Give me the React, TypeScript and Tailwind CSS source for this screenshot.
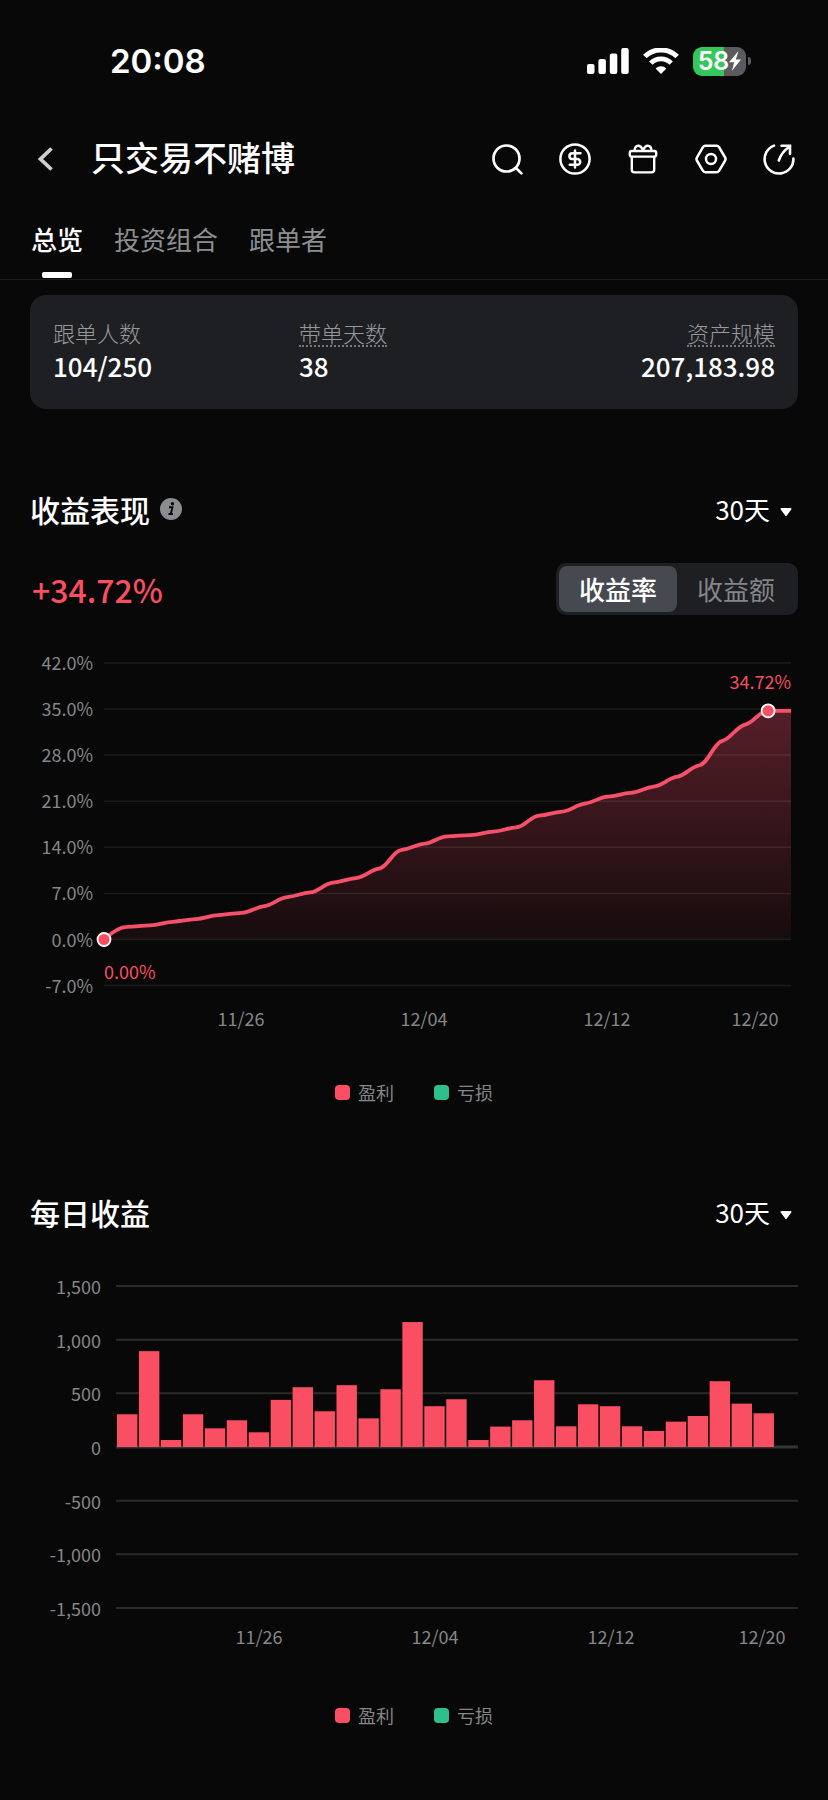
import React, { useState } from 'react';

const RETURNS = [
  0, 1.93, 2.13, 2.69, 3.09, 3.7, 4.05, 5.07, 6.44, 7.15, 8.62, 9.33, 10.75, 13.6, 14.55, 15.66,
  15.86, 16.37, 17.03, 18.8, 19.41, 20.63, 21.69, 22.25, 23.21, 24.68, 26.46, 30.16, 32.64, 34.72, 34.72,
];

const DAILY = [
  305, 893, 65, 305, 174, 249, 137, 439, 557, 333, 576, 267, 538, 1164, 380, 445,
  65, 190, 249, 622, 193, 398, 380, 193, 149, 236, 289, 613, 404, 314, 0,
];

const TABS = ['总览', '投资组合', '跟单者'];
const MODES = ['收益率', '收益额'];
const PERIODS = ['7天', '30天', '90天'];

const SearchIcon = () => (
  <svg className="size-8" viewBox="0 0 32 32" fill="none" stroke="currentColor" strokeWidth="2.7" strokeLinecap="round">
    <circle cx="15.5" cy="15.5" r="13" />
    <path d="M25 25l5.4 5.4" />
  </svg>
);

const DollarIcon = () => (
  <svg className="size-8" viewBox="0 0 32 32" fill="none" stroke="currentColor" strokeWidth="2.5" strokeLinecap="round">
    <circle cx="16" cy="16" r="14.6" />
    <path d="M21.5 10.3h-8.200a2.800 2.800 0 0 0 0 5.700h5a2.900 2.900 0 0 1 0 5.800H10.800M16 7.500v17" />
  </svg>
);

const GiftIcon = () => (
  <svg className="size-8" viewBox="0 0 32 32" fill="none" stroke="currentColor" strokeWidth="2.4" strokeLinejoin="round">
    <rect x="2.8" y="8" width="26.4" height="5.6" rx="1.8" />
    <path d="M4.800 13.600v13.200a2.600 2.600 0 0 0 2.600 2.600h17.200a2.600 2.600 0 0 0 2.600-2.600V13.600" />
    <path d="M7.600 8c0-3 1.200-5.200 3.600-5.200S15 5 16 7.400c1-2.400 2.400-4.600 4.800-4.600S24.400 5 24.400 8" />
  </svg>
);

const HexIcon = () => (
  <svg className="size-8" viewBox="0 0 32 32" fill="none" stroke="currentColor" strokeWidth="2.5" strokeLinejoin="round">
    <path d="M10.400 2.800h11.200a3 3 0 0 1 2.600 1.500l5.900 10.200a3 3 0 0 1 0 3l-5.900 10.200a3 3 0 0 1-2.600 1.500H10.400a3 3 0 0 1-2.600-1.500L1.900 17.500a3 3 0 0 1 0-3L7.800 4.300a3 3 0 0 1 2.600-1.500z" />
    <circle cx="16" cy="16" r="5" />
  </svg>
);

const ShareIcon = () => (
  <svg className="size-8" viewBox="0 0 32 32" fill="none" stroke="currentColor" strokeWidth="2.6" strokeLinecap="round">
    <path d="M11 2.600A14.400 14.400 0 1 0 30.400 15.500" />
    <path d="M15.800 17.500C17.500 12.500 21 7.500 26.200 3.800M18.500 2.800H27V11" />
  </svg>
);

const ACTIONS = [
  { label: '搜索', icon: SearchIcon },
  { label: '费用', icon: DollarIcon },
  { label: '礼物', icon: GiftIcon },
  { label: '设置', icon: HexIcon },
  { label: '分享', icon: ShareIcon },
];

const StatusBar = () => (
  <div className="flex h-[122px] items-center justify-between pr-[77px] pl-[110px]">
    <span className="font-[Inter,sans-serif] text-[33px] leading-10 font-semibold">20:08</span>
    <div className="flex items-center">
      <svg className="h-[26px] w-[42px]" viewBox="0 0 42 26" fill="currentColor">
        <rect x="0" y="16" width="7.5" height="10" rx="2" />
        <rect x="11.4" y="11" width="7.5" height="15" rx="2" />
        <rect x="22.8" y="5.5" width="7.5" height="20.5" rx="2" />
        <rect x="34.2" y="0" width="7.5" height="26" rx="2" />
      </svg>
      <svg className="ml-[14px] h-[26px] w-9" viewBox="0 0 36 26">
        <path d="M1.800 8.600a23 23 0 0 1 32.400 0" fill="none" stroke="currentColor" strokeWidth="5" />
        <path d="M7.800 15.100a14.500 14.500 0 0 1 20.400 0" fill="none" stroke="currentColor" strokeWidth="4.8" />
        <path d="M18 26l-5.400-5.500a7.800 7.800 0 0 1 10.800 0z" fill="currentColor" />
      </svg>
      <div className="ml-[14px] flex items-center gap-0.5">
        <div className="flex h-[29px] w-[53px] items-center justify-center rounded-[9px] bg-linear-to-r from-[#34c759] from-58% to-[#5b5b5f] to-58%">
          <span className="font-[Inter,sans-serif] text-[25px] leading-none font-semibold">58</span>
          <svg className="h-5 w-3" viewBox="0 0 12 20" fill="currentColor">
            <path d="M9.500 0L0 11.200h5.200L2.800 20 12 8.600H6.800z" />
          </svg>
        </div>
        <span className="h-2 w-[3px] rounded-r-full bg-[#5b5b5f]" />
      </div>
    </div>
  </div>
);

const PeriodSelect = ({ label }: { label: string }) => (
  <label className="flex items-center gap-2.5 pr-1.5">
    <select
      aria-label={label}
      defaultValue="30天"
      className="appearance-none bg-transparent text-right text-[26px] leading-10 outline-none"
    >
      {PERIODS.map((period) => (
        <option key={period} className="bg-[#1e1f23]">{period}</option>
      ))}
    </select>
    <svg className="mt-1.5 h-2 w-3" viewBox="0 0 12 8" fill="currentColor">
      <path d="M1.500 0h9a1 1 0 0 1 .8 1.600L6.800 7.400a1 1 0 0 1-1.600 0L.7 1.600A1 1 0 0 1 1.500 0z" />
    </svg>
  </label>
);

const Legend = () => (
  <ul className="flex h-6 items-center justify-center gap-10 text-[18px] text-[#85868a]">
    <li className="flex items-center gap-2">
      <span className="size-[15px] rounded bg-[#fa4e63]" />
      盈利
    </li>
    <li className="flex items-center gap-2">
      <span className="size-[15px] rounded bg-[#2dc08a]" />
      亏损
    </li>
  </ul>
);

const ReturnChart = () => {
  const px = (i: number) => 74 + (i * 687) / 30;
  const py = (v: number) => 294.5 - (v * 46.1) / 7;
  const step = 687 / 30;

  // near-flat tangents give every day its own small shelf
  const slope = (k: number) => {
    if (k <= 0 || k >= RETURNS.length - 1) return 0;
    return Math.min(RETURNS[k] - RETURNS[k - 1], RETURNS[k + 1] - RETURNS[k]) * 0.4;
  };
  const line = RETURNS.map((v, i) => {
    if (i === 0) return `M${px(0)} ${py(v)}`;
    if (i === 1) return `Q${px(1) - step * 0.4} ${py(v)} ${px(1)} ${py(v)}`;
    const c1 = `${px(i - 1) + step * 0.4} ${py(RETURNS[i - 1] + slope(i - 1) * 0.4)}`;
    const c2 = `${px(i) - step * 0.4} ${py(v - slope(i) * 0.4)}`;
    return `C${c1} ${c2} ${px(i)} ${py(v)}`;
  }).join('');

  return (
    <svg className="h-auto w-full" viewBox="0 0 768 390" fontSize="18" role="img" aria-label="收益率">
      <defs>
        <linearGradient id="returnFill" x1="0" y1="0" x2="0" y2="1">
          <stop offset="0" stopColor="#fa4e6e" stopOpacity="0.32" />
          <stop offset="1" stopColor="#fa4e63" stopOpacity="0.06" />
        </linearGradient>
      </defs>
      <path d={`${line}V${py(0)}H${px(0)}Z`} fill="url(#returnFill)" />
      {[42, 35, 28, 21, 14, 7, 0, -7].map((v) => (
        <g key={v}>
          <line x1="74" x2="761" y1={py(v)} y2={py(v)} stroke="#fff" strokeOpacity="0.08" strokeWidth="1.5" />
          <text x="63" y={py(v) + 7} textAnchor="end" fill="#85868a">{v.toFixed(1)}%</text>
        </g>
      ))}
      <path d={line} fill="none" stroke="#f7506a" strokeWidth="3.8" strokeLinejoin="round" />
      {[0, 29].map((i) => (
        <circle key={i} cx={px(i)} cy={py(RETURNS[i])} r="6.5" fill="#fa4e63" stroke="#fff" strokeWidth="1.8" />
      ))}
      <text x="74" y="334" fill="#fa4e63">0.00%</text>
      <text x="761" y="44" textAnchor="end" fill="#fa4e63">34.72%</text>
      <g fill="#85868a" textAnchor="middle">
        <text x="211" y="381">11/26</text>
        <text x="394" y="381">12/04</text>
        <text x="577" y="381">12/12</text>
        <text x="725" y="381">12/20</text>
      </g>
    </svg>
  );
};

const DailyChart = () => {
  const py = (v: number) => 179 - (v * 161) / 1500;

  return (
    <svg className="h-auto w-full" viewBox="0 0 768 382" fontSize="18" role="img" aria-label="每日收益">
      {[1500, 1000, 500, 0, -500, -1000, -1500].map((v) => (
        <g key={v}>
          <line x1="86" x2="768" y1={py(v)} y2={py(v)} stroke={v === 0 ? '#333436' : '#2b2b2b'} strokeWidth={v === 0 ? 3 : 2} />
          <text x="71" y={py(v) + 8} textAnchor="end" fill="#85868a">{v.toLocaleString('en-US')}</text>
        </g>
      ))}
      {DAILY.map((v, i) => (
        <rect key={i} x={87 + i * 21.95} y={py(v)} width="20.4" height={179 - py(v)} fill="#fa4e63" />
      ))}
      <g fill="#85868a" textAnchor="middle">
        <text x="229" y="376">11/26</text>
        <text x="405" y="376">12/04</text>
        <text x="581" y="376">12/12</text>
        <text x="732" y="376">12/20</text>
      </g>
    </svg>
  );
};

export default function App() {
  const [tab, setTab] = useState(TABS[0]);
  const [mode, setMode] = useState(MODES[0]);

  return (
    <div className="min-h-screen bg-[#080808] pb-[72px] font-['Noto_Sans_CJK_SC',sans-serif] text-white">
      <StatusBar />

      <header className="flex h-[74px] items-center pr-[33px] pl-[34px]">
        <button aria-label="返回" className="text-[#cfcfcf]">
          <svg className="h-7 w-[22px]" viewBox="0 0 22 28" fill="none" stroke="currentColor" strokeWidth="3.8">
            <path d="M17.500 3.500L6.500 14l11 10.500" />
          </svg>
        </button>
        <h1 className="ml-[35px] flex-1 pb-1 text-[34px] leading-none font-medium">只交易不赌博</h1>
        <div className="flex gap-9">
          {ACTIONS.map(({ label, icon: Icon }) => (
            <button key={label} aria-label={label}>
              <Icon />
            </button>
          ))}
        </div>
      </header>

      <nav className="flex gap-[31px] border-b border-[#1c1c1c] px-[31px] pt-[23px] pb-px">
        {TABS.map((name) => (
          <button
            key={name}
            onClick={() => setTab(name)}
            className={`flex flex-col items-center text-[26px] leading-10 ${
              tab === name ? 'font-medium text-white' : 'text-[#8d8e92]'
            }`}
          >
            {name}
            <span className={`mt-[13px] h-1.5 w-[30px] rounded-xs ${tab === name ? 'bg-white' : 'bg-transparent'}`} />
          </button>
        ))}
      </nav>

      <main className="px-[30px]">
        <dl className="mt-[15px] grid grid-cols-3 gap-4 rounded-2xl bg-[#1e1f23] px-[23px] pt-6 pb-[27px]">
          <div>
            <dt className="mb-[5px] text-[22px] leading-[26px] font-light text-[#97989c]">跟单人数</dt>
            <dd className="text-[26px] leading-8 font-medium">104/250</dd>
          </div>
          <div>
            <dt className="mb-[3px] w-fit border-b-2 border-dotted border-[#77787c] text-[22px] leading-[26px] font-light text-[#97989c]">带单天数</dt>
            <dd className="text-[26px] leading-8 font-medium">38</dd>
          </div>
          <div className="text-right">
            <dt className="mb-[3px] ml-auto w-fit border-b-2 border-dotted border-[#77787c] text-[22px] leading-[26px] font-light text-[#97989c]">资产规模</dt>
            <dd className="text-[26px] leading-8 font-medium">207,183.98</dd>
          </div>
        </dl>

        <section className="mt-20">
          <div className="flex h-10 items-center justify-between">
            <div className="flex items-center gap-2.5">
              <h2 className="text-[30px] leading-10 font-medium">收益表现</h2>
              <button aria-label="说明">
                <svg className="size-[22px]" viewBox="0 0 22 22">
                  <circle cx="11" cy="11" r="11" fill="#8b8c90" />
                  <circle cx="12.4" cy="5.8" r="1.7" fill="#080808" />
                  <path d="M9 9.300h3.400L10.800 16h2.200M8.400 16h2.400" fill="none" stroke="#080808" strokeWidth="1.9" />
                </svg>
              </button>
            </div>
            <PeriodSelect label="收益表现周期" />
          </div>

          <div className="mt-[34px] flex items-center justify-between">
            <p className="pl-0.5 text-[32px] leading-10 font-medium text-[#fa4e63]">+34.72%</p>
            <div className="flex rounded-[10px] bg-[#1e1f23] p-[3px]">
              {MODES.map((name) => (
                <button
                  key={name}
                  onClick={() => setMode(name)}
                  className={`h-[46px] rounded-lg px-5 text-[26px] leading-none ${
                    mode === name ? 'bg-[#474951] font-medium text-white' : 'text-[#85868a]'
                  }`}
                >
                  {name}
                </button>
              ))}
            </div>
          </div>

          <div className="mt-[30px]">
            <ReturnChart />
          </div>
          <div className="mt-[45px]">
            <Legend />
          </div>
        </section>

        <section className="mt-[88px]">
          <div className="flex h-10 items-center justify-between">
            <h2 className="text-[30px] leading-10 font-medium">每日收益</h2>
            <PeriodSelect label="每日收益周期" />
          </div>
          <div className="mt-9">
            <DailyChart />
          </div>
          <div className="mt-[53px]">
            <Legend />
          </div>
        </section>
      </main>
    </div>
  );
}
